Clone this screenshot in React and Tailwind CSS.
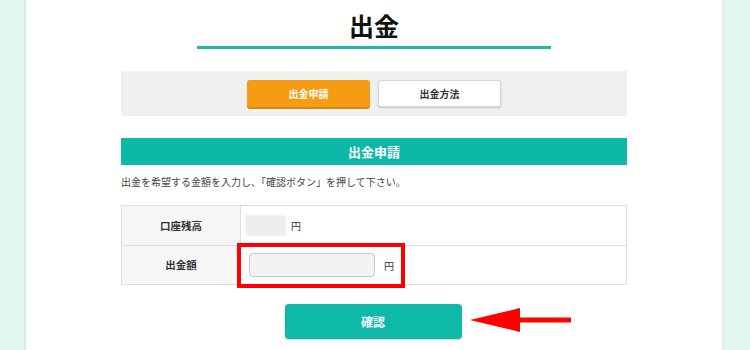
import React from "react";

const font = { fontFamily: '"Noto Sans CJK JP", "Noto Sans", sans-serif' };

function Arrow() {
  return (
    <svg width="104" height="28" viewBox="0 0 104 28" className="absolute left-[185px] top-[2px]">
      <polygon points="0,14 50,2 50,26" fill="#ff0000" />
      <rect x="48" y="11.5" width="53" height="5" fill="#ff0000" />
    </svg>
  );
}

export default function App() {
  return (
    <div className="flex w-[750px] h-[350px] overflow-hidden bg-white text-[#333]" style={font}>
      <div className="w-[26px] bg-[#e2f6f2] border-r-2 border-[#d4efea]" />
      <div className="flex-1 bg-white">
        <div className="w-[506px] mx-auto">
          <h1 className="mt-[7px] h-[37px] text-center text-[25px] font-bold leading-[36px] text-[#111]">出金</h1>
          <div className="w-[354px] h-[3px] mx-auto mt-[2px] bg-[#1fb9ab]" />
          <div className="mt-[22px] h-[45px] bg-[#f0f0f0] flex items-center justify-center gap-[8px]">
            <div className="w-[123px] h-[27px] rounded-[3px] bg-[#f49c14] shadow-[0_2px_0_#d9880c] flex items-center justify-center text-[10px] font-bold text-white">
              出金申請
            </div>
            <div className="w-[123px] h-[27px] rounded-[3px] bg-white border border-[#d6d6d6] shadow-[0_1px_2px_rgba(0,0,0,0.2)] flex items-center justify-center text-[10px] font-bold text-[#333]">
              出金方法
            </div>
          </div>
          <div className="mt-[22px] h-[27px] bg-[#0cb9a8] flex items-center justify-center text-[13px] font-bold text-white">
            出金申請
          </div>
          <p className="mt-[9px] text-[10px] leading-[16px] text-[#444]">
            出金を希望する金額を入力し、「確認ボタン」を押して下さい。
          </p>
          <div className="mt-[15px] border border-[#dedede]">
            <div className="flex h-[40px] border-b border-[#dedede]">
              <div className="w-[119px] bg-[#f6f6f6] border-r border-[#dedede] flex items-center justify-center text-[10.5px] font-bold text-[#333]">
                口座残高
              </div>
              <div className="flex-1 flex items-center pl-[4px]">
                <div className="w-[41px] h-[21px] bg-[#eeeeee] blur-[1px]" />
                <span className="ml-[5px] text-[10px] text-[#333]">円</span>
              </div>
            </div>
            <div className="flex h-[38px]">
              <div className="w-[119px] bg-[#f6f6f6] border-r border-[#dedede] flex items-center justify-center text-[10.5px] font-bold text-[#333]">
                出金額
              </div>
              <div className="relative flex-1 flex items-center pl-[8px]">
                <div className="w-[126px] h-[24px] rounded-[4px] bg-[#f2f2f2] border border-[#c8c8c8]" />
                <span className="ml-[9px] text-[10px] text-[#333]">円</span>
                <div className="absolute left-[-4px] top-[-3px] w-[168px] h-[45px] border-[4px] border-[#ff0000]" />
              </div>
            </div>
          </div>
          <div className="relative mt-[19px] flex justify-center">
            <div className="ml-[-2px] w-[177px] h-[35px] rounded-[4px] bg-[#0fb9a7] shadow-[0_1px_2px_rgba(0,0,0,0.2)] flex items-center justify-center text-[12px] font-bold text-white">
              確認
            </div>
            <div className="absolute left-[164px] top-[0px]">
              <Arrow />
            </div>
          </div>
        </div>
      </div>
      <div className="w-[28px] bg-[#e2f6f2] border-l border-[#d8efeb]" />
    </div>
  );
}
